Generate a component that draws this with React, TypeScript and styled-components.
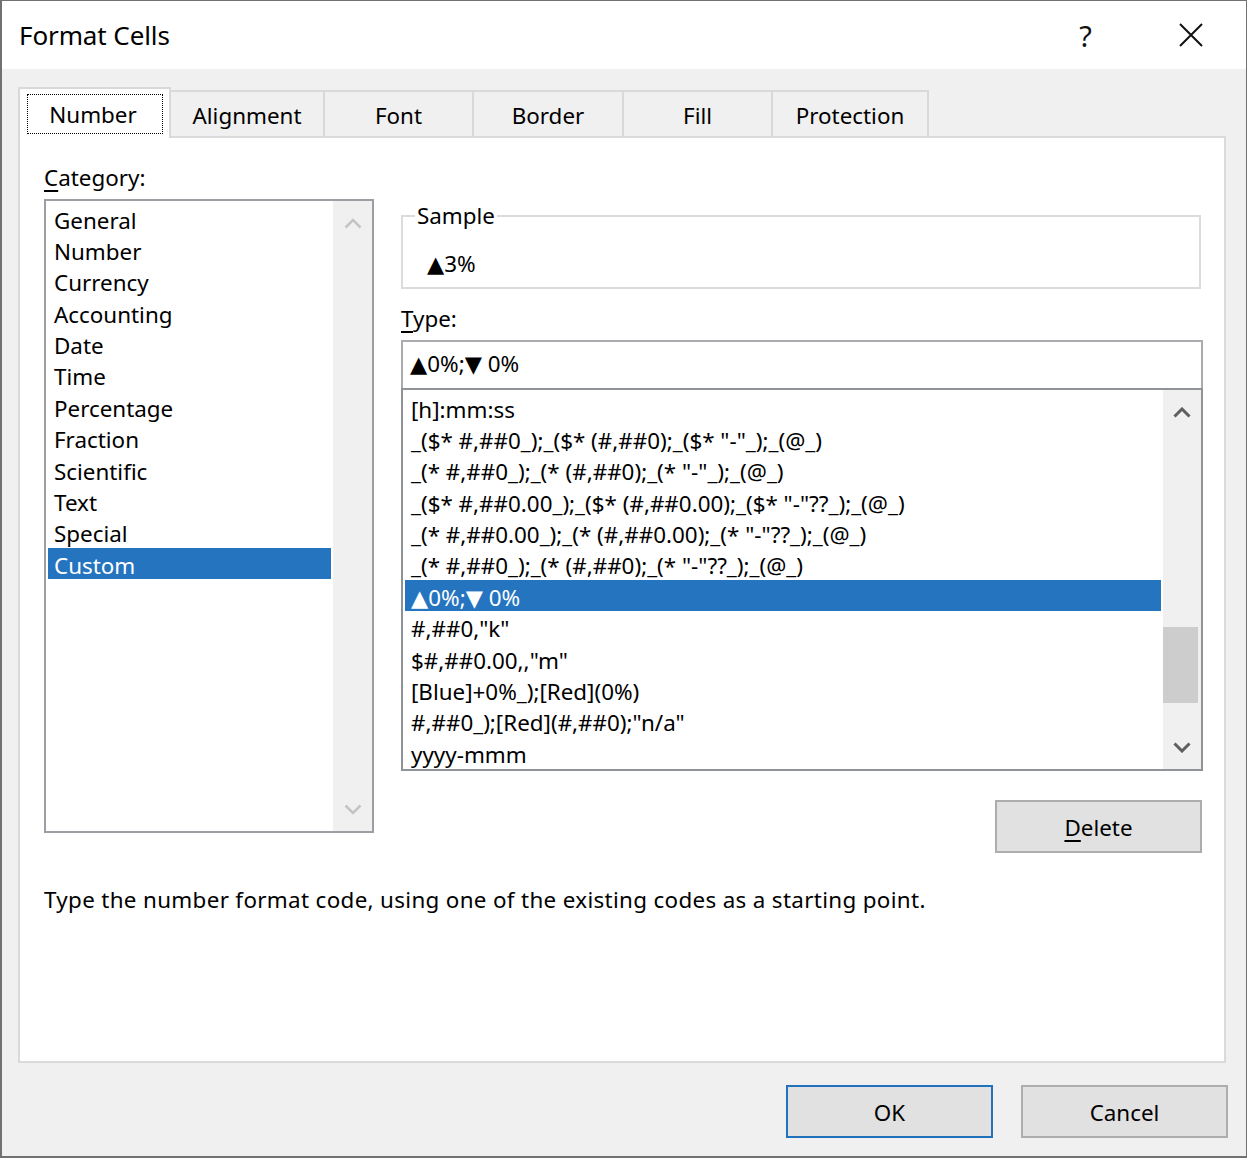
import React from "react";
import styled, { createGlobalStyle, css } from "styled-components";

const FONT = `"Noto Sans", "Open Sans", "DejaVu Sans", sans-serif`;

const GlobalStyle = createGlobalStyle`
  html, body { margin: 0; padding: 0; background: #f0f0f0; }
  body { font-family: ${FONT}; color: #000; }
  * { box-sizing: border-box; }
`;

const Dialog = styled.div`
  width: 1247px;
  height: 1158px;
  display: flex;
  flex-direction: column;
  background: #f0f0f0;
  border-style: solid;
  border-color: #717171;
  border-width: 1px 1px 2px 2px;
  font-family: ${FONT};
  font-size: 22.4px;
  color: #000;
`;

const TitleBar = styled.div`
  height: 68px;
  flex: none;
  background: #fff;
  display: flex;
  align-items: center;
  padding: 0 3px 0 17px;
`;

const Title = styled.div`
  flex: 1;
  font-size: 26px;
  letter-spacing: -0.1px;
`;

const CaptionButton = styled.div`
  width: 105px;
  height: 68px;
  display: flex;
  align-items: center;
  justify-content: center;
  font-size: 29px;
  color: #111;
`;

const Body = styled.div`
  flex: 1;
  display: flex;
  flex-direction: column;
  padding: 18px 18px 0 16px;
`;

const TabStrip = styled.div`
  display: flex;
  align-items: flex-end;
  position: relative;
  z-index: 1;
  margin-bottom: -2px;
`;

const Tab = styled.div<{ $w: number; $active?: boolean }>`
  width: ${(p) => p.$w}px;
  height: 46px;
  margin: 0 0 2px -2px;
  background: #f0f0f0;
  border: 2px solid #d9d9d9;
  border-bottom: none;
  display: flex;
  align-items: center;
  justify-content: center;
  padding-top: 3px;
  ${(p) =>
    p.$active &&
    css`
      height: 51px;
      margin: 0;
      background: #fff;
      align-items: flex-start;
      padding-top: 5px;
      position: relative;
      z-index: 2;
    `}
`;

const FocusBox = styled.span`
  width: 136px;
  height: 40px;
  border: 1px dotted #000;
  display: flex;
  align-items: center;
  justify-content: center;
  padding-right: 3px;
`;

const Panel = styled.div`
  height: 927px;
  margin-right: 2px;
  background: #fff;
  border: 2px solid #dadada;
  padding: 24px 21px 0 24px;
  display: grid;
  grid-template-columns: 330px 1fr;
  grid-template-rows: auto auto;
  column-gap: 27px;
  align-content: start;
`;

const LeftColumn = styled.div`
  display: flex;
  flex-direction: column;
`;

const RightColumn = styled.div`
  display: flex;
  flex-direction: column;
`;

const Label = styled.div<{ $mt?: number }>`
  height: 31px;
  line-height: 31px;
  margin-top: ${(p) => p.$mt ?? 0}px;
`;

const Accel = styled.span`
  text-decoration: underline;
  text-decoration-thickness: 2px;
  text-underline-offset: 4px;
`;

const ListBox = styled.div<{ $h: number; $mt?: number }>`
  height: ${(p) => p.$h}px;
  margin-top: ${(p) => p.$mt ?? 0}px;
  border: 2px solid #9b9ea3;
  background: #fff;
  display: flex;
`;

const Items = styled.div`
  flex: 1;
  min-width: 0;
  padding-top: 1.5px;
  overflow: hidden;
`;

const Row = styled.div<{ $selected?: boolean }>`
  height: 31.4px;
  line-height: 27.4px;
  padding: 4px 0 0 6px;
  margin: 0 2px 0 2px;
  white-space: nowrap;
  ${(p) =>
    p.$selected &&
    css`
      background: #2474c0;
      color: #fff;
    `}
`;

const Scrollbar = styled.div<{ $w: number }>`
  width: ${(p) => p.$w}px;
  flex: none;
  background: #f0f0f0;
  display: flex;
  flex-direction: column;
`;

const ArrowButton = styled.div`
  height: 44px;
  flex: none;
  display: flex;
  align-items: center;
  justify-content: center;
`;

const Track = styled.div`
  flex: 1;
`;

const Thumb = styled.div<{ $top: number; $h: number }>`
  margin-top: ${(p) => p.$top}px;
  height: ${(p) => p.$h}px;
  width: 35px;
  background: #cdcdcd;
`;

const GroupBox = styled.fieldset`
  margin: 38px 2px 0 0;
  padding: 0 0 8px 0;
  border: 2px solid #dcdcdc;
  min-width: 0;
`;

const Legend = styled.legend`
  margin-left: 12px;
  padding: 0 2px;
  line-height: 31px;
`;

const SampleValue = styled.div`
  padding: 17px 0 0 24px;
  height: 48px;
  line-height: 31px;
`;

const TypeInput = styled.div`
  margin-top: 6px;
  height: 48px;
  border: 2px solid #a9abaf;
  border-bottom: none;
  background: #fff;
  padding: 0 0 4px 7px;
  display: flex;
  align-items: center;
`;

const TypeList = styled(ListBox)`
  border-color: #8f9297;
`;

const Button = styled.div<{ $default?: boolean }>`
  width: 207px;
  height: 53px;
  background: #e1e1e1;
  border: 2px solid ${(p) => (p.$default ? "#2271bd" : "#adadad")};
  display: flex;
  align-items: center;
  justify-content: center;
  padding-top: 1px;
`;

const DeleteButton = styled(Button)`
  align-self: flex-end;
  margin: 29px 1px 0 0;
`;

const Description = styled.div`
  grid-column: 1 / span 2;
  margin-top: 31px;
  line-height: 31px;
  letter-spacing: 0.33px;
`;

const Footer = styled.div`
  display: flex;
  justify-content: flex-end;
  gap: 28px;
  padding-top: 22px;
`;

const Chevron: React.FC<{ dir: "up" | "down"; color: string; sw?: number }> = ({
  dir,
  color,
  sw = 3,
}) => (
  <svg width="18" height="11" viewBox="0 0 18 11">
    <path
      d={dir === "up" ? "M1.5 9.5 L9 2 L16.5 9.5" : "M1.5 1.5 L9 9 L16.5 1.5"}
      fill="none"
      stroke={color}
      strokeWidth={sw}
    />
  </svg>
);

const CloseIcon = () => (
  <svg width="24" height="24" viewBox="0 0 24 24">
    <path d="M1 1 L23 23 M23 1 L1 23" stroke="#111" strokeWidth="2" fill="none" />
  </svg>
);

const tabs: { label: string; w: number }[] = [
  { label: "Number", w: 153 },
  { label: "Alignment", w: 156 },
  { label: "Font", w: 151 },
  { label: "Border", w: 152 },
  { label: "Fill", w: 151 },
  { label: "Protection", w: 158 },
];

const categories = [
  "General",
  "Number",
  "Currency",
  "Accounting",
  "Date",
  "Time",
  "Percentage",
  "Fraction",
  "Scientific",
  "Text",
  "Special",
  "Custom",
];

const formats = [
  "[h]:mm:ss",
  '_($* #,##0_);_($* (#,##0);_($* "-"_);_(@_)',
  '_(* #,##0_);_(* (#,##0);_(* "-"_);_(@_)',
  '_($* #,##0.00_);_($* (#,##0.00);_($* "-"??_);_(@_)',
  '_(* #,##0.00_);_(* (#,##0.00);_(* "-"??_);_(@_)',
  '_(* #,##0_);_(* (#,##0);_(* "-"??_);_(@_)',
  "▲0%;▼ 0%",
  '#,##0,"k"',
  '$#,##0.00,,"m"',
  "[Blue]+0%_);[Red](0%)",
  '#,##0_);[Red](#,##0);"n/a"',
  "yyyy-mmm",
];

export default function App() {
  return (
    <>
      <GlobalStyle />
      <Dialog>
        <TitleBar>
          <Title>Format Cells</Title>
          <CaptionButton>?</CaptionButton>
          <CaptionButton>
            <CloseIcon />
          </CaptionButton>
        </TitleBar>
        <Body>
          <TabStrip>
            {tabs.map((t, i) =>
              i === 0 ? (
                <Tab key={t.label} $w={t.w} $active>
                  <FocusBox>{t.label}</FocusBox>
                </Tab>
              ) : (
                <Tab key={t.label} $w={t.w}>
                  {t.label}
                </Tab>
              )
            )}
          </TabStrip>
          <Panel>
            <LeftColumn>
              <Label>
                <Accel>C</Accel>ategory:
              </Label>
              <ListBox $h={634} $mt={6}>
                <Items>
                  {categories.map((c) => (
                    <Row key={c} $selected={c === "Custom"}>
                      {c}
                    </Row>
                  ))}
                </Items>
                <Scrollbar $w={39}>
                  <ArrowButton>
                    <Chevron dir="up" color="#c4c4c4" sw={2.5} />
                  </ArrowButton>
                  <Track />
                  <ArrowButton>
                    <Chevron dir="down" color="#c4c4c4" sw={2.5} />
                  </ArrowButton>
                </Scrollbar>
              </ListBox>
            </LeftColumn>
            <RightColumn>
              <GroupBox>
                <Legend>Sample</Legend>
                <SampleValue>▲3%</SampleValue>
              </GroupBox>
              <Label $mt={14}>
                <Accel>T</Accel>ype:
              </Label>
              <TypeInput>▲0%;▼ 0%</TypeInput>
              <TypeList $h={383}>
                <Items>
                  {formats.map((f) => (
                    <Row key={f} $selected={f === "▲0%;▼ 0%"}>
                      {f}
                    </Row>
                  ))}
                </Items>
                <Scrollbar $w={38}>
                  <ArrowButton>
                    <Chevron dir="up" color="#5f5f5f" />
                  </ArrowButton>
                  <Track>
                    <Thumb $top={193} $h={76} />
                  </Track>
                  <ArrowButton>
                    <Chevron dir="down" color="#5f5f5f" />
                  </ArrowButton>
                </Scrollbar>
              </TypeList>
              <DeleteButton>
                <span>
                  <Accel>D</Accel>elete
                </span>
              </DeleteButton>
            </RightColumn>
            <Description>
              Type the number format code, using one of the existing codes as a starting point.
            </Description>
          </Panel>
          <Footer>
            <Button $default>OK</Button>
            <Button>Cancel</Button>
          </Footer>
        </Body>
      </Dialog>
    </>
  );
}
